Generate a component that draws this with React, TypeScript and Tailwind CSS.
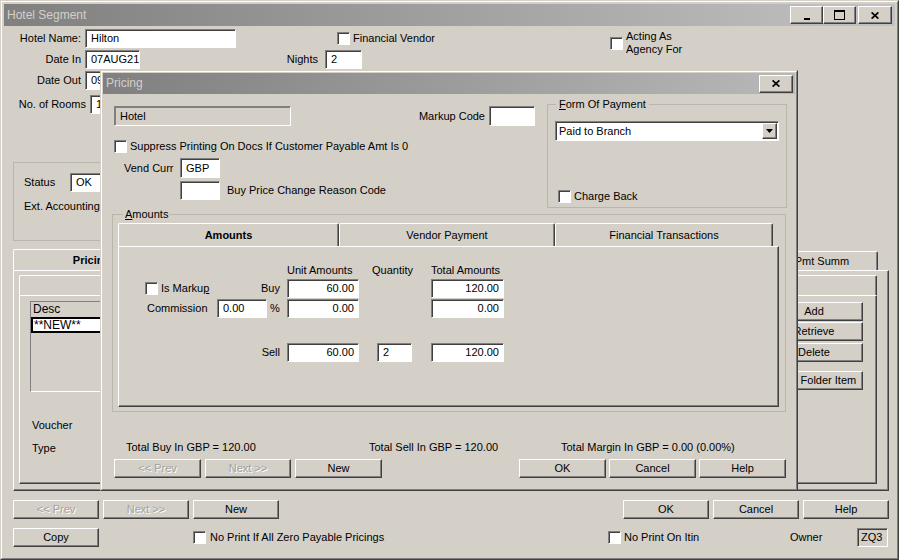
import type { ReactNode } from 'react'

const sunken =
  'border border-t-[#808080] border-l-[#808080] border-r-white border-b-white shadow-[inset_1px_1px_0_#404040]'
const raised =
  'border border-t-white border-l-white border-r-[#404040] border-b-[#404040] shadow-[inset_-1px_-1px_0_#808080]'

function Field({
  value = '',
  className = '',
  right = false,
  gray = false,
}: {
  value?: string
  className?: string
  right?: boolean
  gray?: boolean
}) {
  return (
    <div
      className={`${sunken} flex shrink-0 items-center overflow-hidden whitespace-nowrap ${
        gray ? 'bg-[#d4d0c8]' : 'bg-white'
      } ${right ? 'justify-end pr-[4px]' : 'pl-[5px]'} ${className}`}
    >
      {value}
    </div>
  )
}

function Check() {
  return <div className={`${sunken} h-[13px] w-[13px] shrink-0 bg-white`} />
}

function Btn({ label, className = '', disabled = false }: { label: string; className?: string; disabled?: boolean }) {
  return (
    <button
      type="button"
      className={`${raised} flex h-[19px] shrink-0 items-center justify-center whitespace-nowrap bg-[#d4d0c8] ${
        disabled ? 'text-[#a4a19b] [text-shadow:1px_1px_0_#fff]' : ''
      } ${className}`}
    >
      {label}
    </button>
  )
}

function CloseGlyph() {
  return (
    <svg width="8" height="7" viewBox="0 0 8 7">
      <path d="M0.6 0.4 L7.4 6.6 M7.4 0.4 L0.6 6.6" stroke="black" strokeWidth="1.7" />
    </svg>
  )
}

function Tab({ children, className = '' }: { children?: ReactNode; className?: string }) {
  return (
    <div
      className={`flex shrink-0 items-center justify-center whitespace-nowrap rounded-t-[2px] border-l border-r border-t border-l-white border-r-[#404040] border-t-white shadow-[inset_-1px_0_0_#808080] ${className}`}
    >
      {children}
    </div>
  )
}

function HotelSegment() {
  return (
    <div className="h-[560px] w-[899px] border border-t-[#d4d0c8] border-l-[#d4d0c8] border-r-[#404040] border-b-[#404040]">
      <div className="flex h-full flex-col border border-t-white border-l-white border-r-[#808080] border-b-[#808080] p-[2px]">
        {/* title bar */}
        <div className="flex h-[22px] shrink-0 items-center bg-linear-to-r from-[#808080] to-[#c2c2c2] pl-[3px] text-[12px] text-[#d4d0c8]">
          <span>Hotel Segment</span>
          <div className="ml-auto mr-[3px] flex items-center">
            <div className={`${raised} flex h-[18px] w-[33px] items-end justify-center bg-[#d4d0c8] pb-[3px]`}>
              <div className="h-[2px] w-[6px] bg-black" />
            </div>
            <div className={`${raised} flex h-[18px] w-[33px] items-center justify-center bg-[#d4d0c8]`}>
              <div className="h-[10px] w-[11px] border border-t-2 border-black" />
            </div>
            <div className={`${raised} ml-[2px] flex h-[18px] w-[34px] items-center justify-center bg-[#d4d0c8]`}>
              <CloseGlyph />
            </div>
          </div>
        </div>

        {/* header fields */}
        <div className="mt-[3px] flex h-[19px] items-center">
          <span className="w-[77px] text-right">Hotel Name:</span>
          <Field value="Hilton" className="ml-[4px] h-[19px] w-[151px]" />
          <div className="ml-[101px] flex w-[273px] items-center">
            <Check />
            <span className="ml-[3px]">Financial Vendor</span>
          </div>
          <div className="mt-[1px] flex items-center self-start">
            <Check />
            <span className="ml-[3px]">
              Acting As
              <br />
              Agency For
            </span>
          </div>
        </div>
        <div className="mt-[2px] flex h-[19px] items-center">
          <span className="w-[77px] text-right">Date In</span>
          <Field value="07AUG21" className="ml-[4px] h-[19px] w-[55px]" />
          <span className="w-[178px] text-right">Nights</span>
          <Field value="2" className="ml-[7px] h-[19px] w-[37px]" />
        </div>
        <div className="mt-[2px] flex h-[19px] items-center">
          <span className="w-[77px] text-right">Date Out</span>
          <Field value="09AUG21" className="ml-[4px] h-[19px] w-[55px]" />
        </div>
        <div className="mt-[5px] flex h-[19px] items-center">
          <span className="w-[82px] text-right">No. of Rooms</span>
          <Field value="1" className="ml-[4px] h-[19px] w-[30px]" />
        </div>

        {/* status group */}
        <div className="ml-[9px] mt-[48px] h-[79px] w-[600px] border border-[#bab6ae] pl-[10px] pt-[10px]">
          <div className="flex h-[19px] items-center">
            <span className="w-[46px]">Status</span>
            <Field value="OK" className="h-[19px] w-[60px]" />
          </div>
          <div className="mt-[8px]">Ext. Accounting Code</div>
        </div>

        {/* tab control */}
        <div className="ml-[9px] mt-[8px] w-[876px]">
          <div className="flex h-[21px] items-end">
            <Tab className="h-[21px] w-[157px] font-bold">Pricing</Tab>
            <Tab className="ml-auto mr-[11px] h-[19px] w-[150px]">Vendor Pmt Summ</Tab>
          </div>
          <div className={`${raised} h-[221px] pl-[5px] pt-[4px]`}>
            <div className="w-[858px]">
              <Tab className="h-[20px] w-[858px]" />
              <div className={`${raised} flex h-[189px] pl-[10px] pt-[5px]`}>
                <div className="flex flex-col">
                  <div className="h-[91px] w-[320px] border border-t-[#808080] border-l-[#808080] border-r-white border-b-white text-[12px]">
                    <div className="flex h-[15px] items-center pl-[2px]">Desc</div>
                    <div className="flex h-[16px] items-center border-2 border-black bg-white pl-[1px]">**NEW**</div>
                  </div>
                  <div className="ml-[2px] mt-[27px]">Voucher</div>
                  <div className="ml-[2px] mt-[10px]">Type</div>
                </div>
                <div className="ml-auto mr-[13px] flex flex-col">
                  <Btn label="Add" className="mt-[1px] w-[98px]" />
                  <Btn label="Retrieve" className="mt-[1px] w-[98px]" />
                  <Btn label="Delete" className="mt-[2px] w-[98px]" />
                  <Btn label="Copy Folder Item" className="mt-[9px] w-[98px]" />
                </div>
              </div>
            </div>
          </div>
        </div>

        {/* bottom buttons */}
        <div className="mt-[9px] flex items-center">
          <Btn label="<< Prev" disabled className="ml-[9px] w-[86px]" />
          <Btn label="Next >>" disabled className="ml-[4px] w-[86px]" />
          <Btn label="New" className="ml-[4px] w-[86px]" />
          <Btn label="OK" className="ml-auto w-[86px]" />
          <Btn label="Cancel" className="ml-[4px] w-[86px]" />
          <Btn label="Help" className="ml-[4px] mr-[6px] w-[86px]" />
        </div>
        <div className="mt-[9px] flex h-[19px] items-center">
          <Btn label="Copy" className="ml-[9px] w-[86px]" />
          <div className="ml-[94px] flex w-[415px] items-center">
            <Check />
            <span className="ml-[4px]">No Print If All Zero Payable Pricings</span>
          </div>
          <div className="flex w-[182px] items-center">
            <Check />
            <span className="ml-[3px]">No Print On Itin</span>
          </div>
          <span className="w-[67px]">Owner</span>
          <Field value="ZQ3" gray className="h-[19px] w-[31px] !pl-[3px]" />
        </div>
      </div>
    </div>
  )
}

function Pricing() {
  return (
    <div className="h-[421px] w-[698px] border border-t-[#d4d0c8] border-l-[#d4d0c8] border-r-[#404040] border-b-[#404040]">
      <div className="flex h-full flex-col border border-t-white border-l-white border-r-[#808080] border-b-[#808080] bg-[#d4d0c8] p-[1px]">
        <div className="flex h-[21px] shrink-0 items-center bg-linear-to-r from-[#808080] to-[#b8b8b8] pl-[3px] text-[12px] text-[#d4d0c8]">
          <span>Pricing</span>
          <div className={`${raised} ml-auto mr-[2px] flex h-[18px] w-[34px] items-center justify-center bg-[#d4d0c8]`}>
            <CloseGlyph />
          </div>
        </div>

        <div className="flex items-start">
          <div className="ml-[9px] w-[423px] pt-[12px]">
            <div className="flex h-[20px] items-center">
              <Field
                value="Hotel"
                gray
                className="ml-[2px] h-[20px] w-[177px] border-t-[#404040] border-l-[#404040] shadow-[inset_1px_1px_0_#808080]"
              />
              <span className="ml-auto">Markup Code</span>
              <Field className="ml-[4px] h-[20px] w-[46px]" />
            </div>
            <div className="mt-[14px] flex h-[13px] items-center">
              <div className="ml-[2px]">
                <Check />
              </div>
              <span className="ml-[3px]">Suppress Printing On Docs If Customer Payable Amt Is 0</span>
            </div>
            <div className="mt-[5px] flex h-[20px] items-center">
              <span className="ml-[12px] w-[56px]">Vend Curr</span>
              <Field value="GBP" className="h-[20px] w-[40px]" />
            </div>
            <div className="mt-[3px] flex h-[19px] items-center">
              <Field className="ml-[68px] h-[19px] w-[40px]" />
              <span className="ml-[7px]">Buy Price Change Reason Code</span>
            </div>
          </div>

          <fieldset className="ml-[12px] mt-[4px] h-[110px] w-[240px] border border-[#bab6ae]">
            <legend className="ml-[8px] px-[3px]">
              <span className="underline">F</span>orm Of Payment
            </legend>
            <div className={`${sunken} ml-[7px] mt-[10px] flex h-[20px] w-[224px] items-center bg-white pl-[3px]`}>
              <span>Paid to Branch</span>
              <div className={`${raised} ml-auto mr-[1px] flex h-[16px] w-[15px] items-center justify-center bg-[#d4d0c8]`}>
                <svg width="7" height="4" viewBox="0 0 7 4">
                  <path d="M0 0h7L3.5 4z" fill="black" />
                </svg>
              </div>
            </div>
            <div className="ml-[10px] mt-[49px] flex items-center">
              <Check />
              <span className="ml-[3px]">Charge Back</span>
            </div>
          </fieldset>
        </div>

        <fieldset className="ml-[9px] h-[204px] w-[674px] border border-[#bab6ae]">
          <legend className="ml-[10px] px-[2px]">
            <span className="underline">A</span>mounts
          </legend>
          <div className="ml-[5px] mt-[2px] w-[661px]">
            <div className="flex h-[23px]">
              <Tab className="h-[23px] w-[221px] font-bold">Amounts</Tab>
              <Tab className="h-[23px] w-[216px]">Vendor Payment</Tab>
              <Tab className="h-[23px] w-[218px]">Financial Transactions</Tab>
            </div>
            <div className="h-[161px] border border-t-white border-l-white border-r-[#404040] border-b-[#404040] shadow-[inset_-1px_-1px_0_#808080,inset_0_-1px_0_#404040]">
              <div className="mt-[17px] flex h-[12px] items-center whitespace-nowrap">
                <div className="w-[168px]" />
                <span className="w-[72px]">Unit Amounts</span>
                <span className="w-[72px] pl-[13px]">Quantity</span>
                <span>Total Amounts</span>
              </div>
              <div className="mt-[3px] flex h-[19px] items-center">
                <div className="flex w-[168px] items-center">
                  <div className="ml-[26px]">
                    <Check />
                  </div>
                  <span className="ml-[3px]">
                    Is Marku<span className="underline">p</span>
                  </span>
                  <span className="ml-auto mr-[7px]">Buy</span>
                </div>
                <Field value="60.00" right className="h-[19px] w-[72px]" />
                <div className="w-[72px]" />
                <Field value="120.00" right className="h-[19px] w-[73px]" />
              </div>
              <div className="mt-[1px] flex h-[19px] items-center">
                <div className="flex w-[168px] items-center">
                  <span className="ml-[28px]">Commission</span>
                  <Field value="0.00" className="ml-auto h-[19px] w-[50px]" />
                  <span className="mr-[4px] w-[16px] text-center">%</span>
                </div>
                <Field value="0.00" right className="h-[19px] w-[72px]" />
                <div className="w-[72px]" />
                <Field value="0.00" right className="h-[19px] w-[73px]" />
              </div>
              <div className="mt-[25px] flex h-[19px] items-center">
                <div className="flex w-[168px] items-center">
                  <span className="ml-auto mr-[7px]">Sell</span>
                </div>
                <Field value="60.00" right className="h-[19px] w-[72px]" />
                <div className="w-[72px]">
                  <Field value="2" className="ml-[18px] h-[19px] w-[35px]" />
                </div>
                <Field value="120.00" right className="h-[19px] w-[73px]" />
              </div>
            </div>
          </div>
        </fieldset>

        <div className="ml-[23px] mt-[29px] flex h-[12px] items-center whitespace-nowrap">
          <span className="w-[243px]">Total Buy In GBP = 120.00</span>
          <span className="w-[192px]">Total Sell In GBP = 120.00</span>
          <span>Total Margin In GBP = 0.00 (0.00%)</span>
        </div>
        <div className="mt-[6px] flex items-center">
          <Btn label="<< Prev" disabled className="ml-[11px] w-[87px]" />
          <Btn label="Next >>" disabled className="ml-[4px] w-[86px]" />
          <Btn label="New" className="ml-[4px] w-[87px]" />
          <Btn label="OK" className="ml-auto w-[87px]" />
          <Btn label="Cancel" className="ml-[3px] w-[87px]" />
          <Btn label="Help" className="ml-[3px] mr-[9px] w-[87px]" />
        </div>
      </div>
    </div>
  )
}

export default function App() {
  return (
    <div className="relative h-[560px] w-[899px] overflow-hidden bg-[#d4d0c8] font-['Liberation_Sans',Arial,sans-serif] text-[11px] leading-[13px] text-black">
      <HotelSegment />
      <div className="absolute left-[100px] top-[70px]">
        <Pricing />
      </div>
    </div>
  )
}
